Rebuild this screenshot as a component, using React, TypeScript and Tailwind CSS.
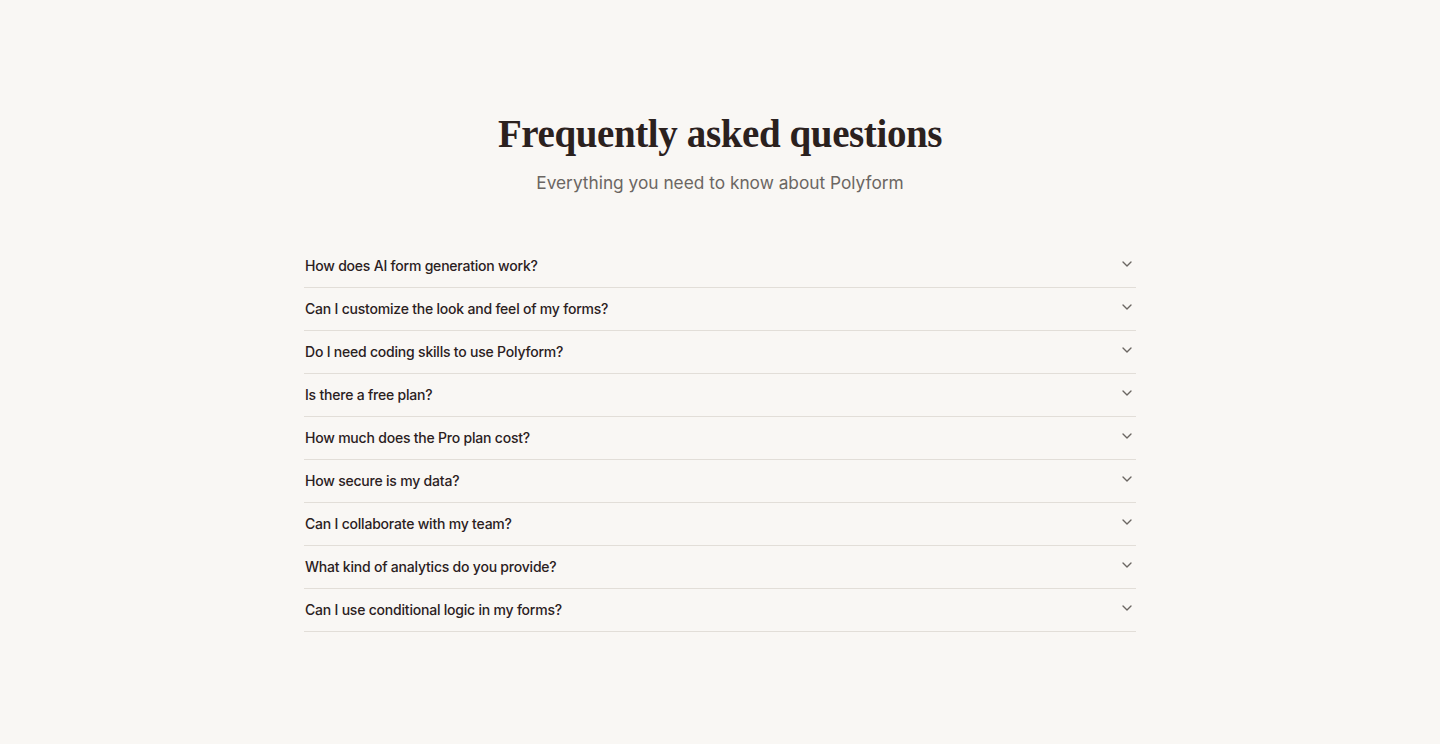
import React from "react";

const items = [
  "How does AI form generation work?",
  "Can I customize the look and feel of my forms?",
  "Do I need coding skills to use Polyform?",
  "Is there a free plan?",
  "How much does the Pro plan cost?",
  "How secure is my data?",
  "Can I collaborate with my team?",
  "What kind of analytics do you provide?",
  "Can I use conditional logic in my forms?",
];

export default function App() {
  return (
    <div className="min-h-[744px] w-full bg-[#f9f7f4] font-['Inter',sans-serif]">
      <div className="mx-auto w-[832px] pt-[110px]">
        <h1 className="text-center font-['Liberation_Serif',serif] text-[39px] font-bold leading-[48px] tracking-[-0.01em] text-[#2b211e]">
          Frequently asked questions
        </h1>
        <p className="mt-[11px] text-center text-[17.3px] leading-[28px] text-[#6b6662]">
          Everything you need to know about Polyform
        </p>
        <div className="mt-12">
          {items.map((q) => (
            <div
              key={q}
              className="flex items-start justify-between border-b border-[#e2ded8] py-[11px] pl-[1px]"
            >
              <span className="text-[14px] leading-[20px] font-medium tracking-[-0.015em] text-[#2b211e]">{q}</span>
              <svg
                width="16"
                height="16"
                viewBox="0 0 24 24"
                fill="none"
                stroke="#6b6662"
                strokeWidth="2"
                strokeLinecap="round"
                strokeLinejoin="round"
                className="mr-[1px]"
              >
                <path d="m6 9 6 6 6-6" />
              </svg>
            </div>
          ))}
        </div>
      </div>
    </div>
  );
}
